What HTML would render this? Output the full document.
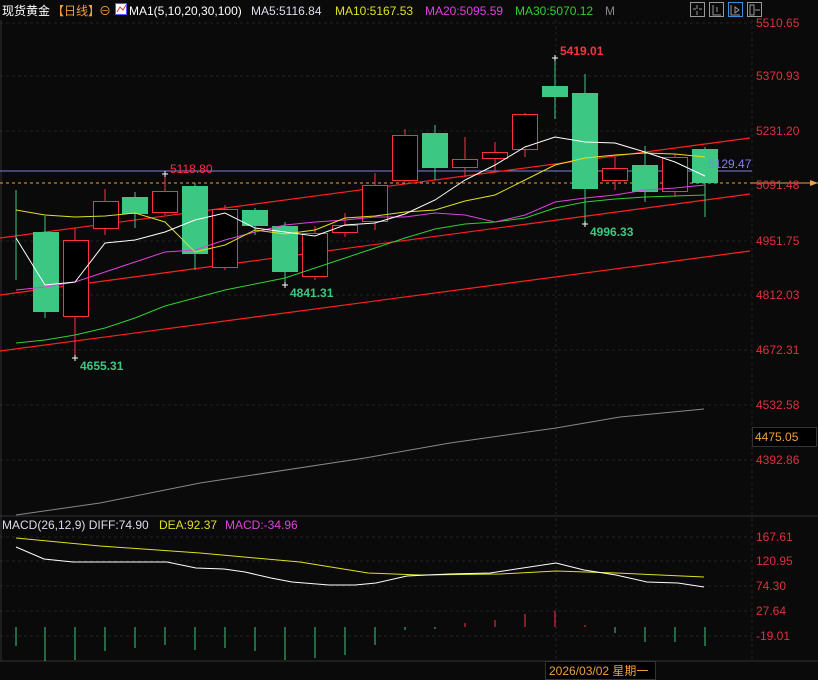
<!DOCTYPE html>
<html><head><meta charset="utf-8"><style>
html,body{margin:0;padding:0;background:#0a0a0a;width:818px;height:680px;overflow:hidden}
svg{display:block}
text{font-family:"Liberation Sans","Noto Sans CJK SC",sans-serif;font-size:12px}
</style></head><body>
<svg width="818" height="680" viewBox="0 0 818 680" xmlns="http://www.w3.org/2000/svg">
<rect width="818" height="680" fill="#0a0a0a"/>
<g stroke="#222" stroke-dasharray="3,3" stroke-width="1">
<line x1="0" y1="23" x2="752" y2="23"/><line x1="0" y1="76" x2="752" y2="76"/><line x1="0" y1="131" x2="752" y2="131"/>
<line x1="0" y1="241" x2="752" y2="241"/><line x1="0" y1="295" x2="752" y2="295"/><line x1="0" y1="350" x2="752" y2="350"/>
<line x1="0" y1="405" x2="752" y2="405"/><line x1="0" y1="460" x2="752" y2="460"/>
<line x1="0" y1="537" x2="752" y2="537"/><line x1="0" y1="561" x2="752" y2="561"/><line x1="0" y1="586" x2="752" y2="586"/><line x1="0" y1="611" x2="752" y2="611"/><line x1="0" y1="636" x2="752" y2="636"/>
<line x1="752" y1="20" x2="752" y2="660"/><line x1="556" y1="20" x2="556" y2="660"/>
</g>
<line x1="0" y1="516" x2="818" y2="516" stroke="#333"/>
<line x1="0" y1="661" x2="818" y2="661" stroke="#333"/>
<line x1="1" y1="20" x2="1" y2="661" stroke="#333"/>
<line x1="0" y1="171" x2="752" y2="171" stroke="#8080e0"/>
<line x1="0" y1="183" x2="752" y2="183" stroke="#f0a040" stroke-dasharray="3,3"/>
<line x1="752" y1="183" x2="818" y2="183" stroke="#f0a040"/>
<g stroke="#ff2020" stroke-width="1.2">
<line x1="0" y1="238" x2="750" y2="138"/>
<line x1="0" y1="295" x2="750" y2="194"/>
<line x1="0" y1="351" x2="750" y2="251"/>
</g>
<polyline fill="none" stroke="#888" points="16,515 100,503 200,483 365,458 450,443 556,428 620,417 704,409" />
<g stroke-width="1">
<line x1="16" y1="190" x2="16" y2="280" stroke="#3cc882"/>
<line x1="45" y1="216" x2="45" y2="318" stroke="#3cc882"/>
<line x1="75" y1="228" x2="75" y2="358" stroke="#ff3040"/>
<line x1="105" y1="189" x2="105" y2="235" stroke="#ff3040"/>
<line x1="135" y1="192" x2="135" y2="228" stroke="#3cc882"/>
<line x1="165" y1="174" x2="165" y2="215" stroke="#ff3040"/>
<line x1="195" y1="183" x2="195" y2="270" stroke="#3cc882"/>
<line x1="225" y1="205" x2="225" y2="270" stroke="#ff3040"/>
<line x1="255" y1="208" x2="255" y2="235" stroke="#3cc882"/>
<line x1="285" y1="222" x2="285" y2="285" stroke="#3cc882"/>
<line x1="315" y1="226" x2="315" y2="280" stroke="#ff3040"/>
<line x1="345" y1="213" x2="345" y2="237" stroke="#ff3040"/>
<line x1="375" y1="173" x2="375" y2="230" stroke="#ff3040"/>
<line x1="405" y1="129" x2="405" y2="182" stroke="#ff3040"/>
<line x1="435" y1="125" x2="435" y2="180" stroke="#3cc882"/>
<line x1="465" y1="137" x2="465" y2="177" stroke="#ff3040"/>
<line x1="495" y1="142" x2="495" y2="172" stroke="#ff3040"/>
<line x1="525" y1="113" x2="525" y2="157" stroke="#ff3040"/>
<line x1="555" y1="58" x2="555" y2="119" stroke="#3cc882"/>
<line x1="585" y1="74" x2="585" y2="224" stroke="#3cc882"/>
<line x1="615" y1="157" x2="615" y2="190" stroke="#ff3040"/>
<line x1="645" y1="146" x2="645" y2="202" stroke="#3cc882"/>
<line x1="675" y1="154" x2="675" y2="197" stroke="#ff3040"/>
<line x1="705" y1="147" x2="705" y2="217" stroke="#3cc882"/>
</g>
<g fill="#3cc882">
<rect x="33" y="232" width="26" height="80"/>
<rect x="122" y="197" width="26" height="17"/>
<rect x="182" y="186" width="26" height="68"/>
<rect x="242" y="210" width="26" height="16"/>
<rect x="272" y="226" width="26" height="46"/>
<rect x="422" y="133" width="26" height="35"/>
<rect x="542" y="86" width="26" height="11"/>
<rect x="572" y="93" width="26" height="96"/>
<rect x="632" y="165" width="26" height="27"/>
<rect x="692" y="149" width="26" height="34"/>
</g>
<g fill="#000" stroke="#ff3040" stroke-width="1">
<rect x="63.5" y="240.5" width="25" height="76"/>
<rect x="93.5" y="201.5" width="25" height="27"/>
<rect x="152.5" y="191.5" width="25" height="21"/>
<rect x="212.5" y="209.5" width="25" height="58"/>
<rect x="302.5" y="233.5" width="25" height="43"/>
<rect x="332.5" y="225.5" width="25" height="7"/>
<rect x="362.5" y="185.5" width="25" height="36"/>
<rect x="392.5" y="135.5" width="25" height="45"/>
<rect x="452.5" y="159.5" width="25" height="8"/>
<rect x="482.5" y="152.5" width="25" height="6"/>
<rect x="512.5" y="114.5" width="25" height="35"/>
<rect x="602.5" y="168.5" width="25" height="12"/>
<rect x="662.5" y="157.5" width="25" height="34"/>
</g>
<g fill="none" stroke-width="1">
<polyline stroke="#30d030" points="16,343 45,340 75,335 105,328 135,318 165,306 195,298 225,290 255,284 285,278 315,268 345,258 375,248 405,238 435,229 465,224 495,222 525,218 555,208 585,202 615,199 645,197 675,196 705,195"/>
<polyline stroke="#e040e0" points="16,290 45,287 75,282 105,272 135,262 165,252 195,250 225,240 255,232 285,225 315,222 345,220 375,217 405,217 435,213 465,215 495,222 525,215 555,202 585,198 615,195 645,190 675,188 705,185"/>
<polyline stroke="#e0e020" points="16,210 45,215 75,217 105,216 135,213 165,222 195,252 225,245 255,230 285,234 315,230 345,218 375,216 405,212 435,210 465,201 495,195 525,180 555,165 585,158 615,155 645,153 675,154 705,157"/>
<polyline stroke="#ffffff" points="16,238 45,285 75,282 105,243 135,240 165,232 195,220 225,213 255,228 285,232 315,236 345,225 375,223 405,214 435,200 465,180 495,165 525,147 555,137 585,142 615,143 645,152 675,162 705,176"/>
</g>
<g stroke="#fff"><path d="M162 174h6M165 171v6M552 58h6M555 55v6M72 358h6M75 355v6M282 285h6M285 282v6M582 224h6M585 221v6"/></g>
<text x="170" y="173" fill="#ff3040">5118.80</text>
<text x="560" y="55" fill="#ff3040" font-weight="bold">5419.01</text>
<text x="80" y="370" fill="#3cc882" font-weight="bold">4655.31</text>
<text x="290" y="297" fill="#3cc882" font-weight="bold">4841.31</text>
<text x="590" y="236" fill="#3cc882" font-weight="bold">4996.33</text>
<text x="708" y="168" fill="#8080f0">5129.47</text>
<g fill="#e0303e">
<text x="756" y="27">5510.65</text><text x="756" y="80">5370.93</text><text x="756" y="135">5231.20</text>
<text x="756" y="189">5091.48</text><text x="756" y="245">4951.75</text><text x="756" y="299">4812.03</text>
<text x="756" y="354">4672.31</text><text x="756" y="409">4532.58</text><text x="756" y="464">4392.86</text>
<text x="756" y="541">167.61</text><text x="756" y="565">120.95</text><text x="756" y="590">74.30</text>
<text x="756" y="615">27.64</text><text x="756" y="640">-19.01</text>
</g>
<rect x="752.5" y="427.5" width="64" height="19" fill="#000" stroke="#333"/>
<text x="755" y="441" fill="#f0a040">4475.05</text>
<path d="M810 180l8 3-8 3z" fill="#f0a040"/>
<text x="2" y="15" fill="#fff">现货黄金</text>
<text x="52" y="15" fill="#f0a040">【日线】</text>
<text x="99" y="15" fill="#f0a040">⊖</text>
<rect x="115.5" y="3.5" width="11" height="11" fill="#fff" stroke="#55f"/>
<path d="M117 12l3-5 3 3 3-5" stroke="#e33" fill="none"/>
<text x="129" y="15" fill="#fff">MA1(5,10,20,30,100)</text>
<text x="251" y="15" fill="#dde">MA5:5116.84</text>
<text x="335" y="15" fill="#e0e020">MA10:5167.53</text>
<text x="425" y="15" fill="#e040e0">MA20:5095.59</text>
<text x="515" y="15" fill="#30d030">MA30:5070.12</text>
<text x="605" y="15" fill="#888">M</text>
<g fill="none" stroke="#999">
<rect x="690.5" y="2.5" width="14" height="14"/><rect x="709.5" y="2.5" width="14" height="14"/>
<rect x="728.5" y="2.5" width="14" height="14" stroke="#3a8ee0"/><rect x="747.5" y="2.5" width="14" height="14"/>
<path d="M697 5v4M697 11v4M693 9h3M699 9h3M713 5v10h8M717 7v5M731 5v10h9M735 7l4 3-4 3z M750 5v10h4v-10z M755 10h5"/>
</g>
<text x="2" y="529" fill="#dde">MACD(26,12,9) DIFF:74.90</text>
<text x="159" y="529" fill="#e0e020">DEA:92.37</text>
<text x="225" y="529" fill="#e040e0">MACD:-34.96</text>
<g stroke-width="1">
<g stroke="#3cc882">
<line x1="16" y1="627" x2="16" y2="646"/><line x1="45" y1="627" x2="45" y2="661"/><line x1="75" y1="627" x2="75" y2="660"/>
<line x1="105" y1="627" x2="105" y2="651"/><line x1="135" y1="627" x2="135" y2="648"/><line x1="165" y1="627" x2="165" y2="645"/>
<line x1="195" y1="627" x2="195" y2="650"/><line x1="225" y1="627" x2="225" y2="648"/><line x1="255" y1="627" x2="255" y2="651"/>
<line x1="285" y1="627" x2="285" y2="660"/><line x1="315" y1="627" x2="315" y2="658"/><line x1="345" y1="627" x2="345" y2="655"/>
<line x1="375" y1="627" x2="375" y2="645"/><line x1="405" y1="627" x2="405" y2="630"/><line x1="435" y1="627" x2="435" y2="629"/>
<line x1="615" y1="627" x2="615" y2="633"/><line x1="645" y1="627" x2="645" y2="642"/><line x1="675" y1="627" x2="675" y2="642"/><line x1="705" y1="627" x2="705" y2="646"/>
</g>
<g stroke="#ff3040">
<line x1="465" y1="627" x2="465" y2="623"/><line x1="495" y1="627" x2="495" y2="620"/><line x1="525" y1="627" x2="525" y2="614"/><line x1="555" y1="627" x2="555" y2="611"/><line x1="585" y1="627" x2="585" y2="625"/>
</g>
</g>
<polyline fill="none" stroke="#e0e020" points="16,538 100,546 200,553 300,562 368,573 420,575 500,574 556,571 616,573 660,575 704,577"/>
<polyline fill="none" stroke="#fff" points="16,547 44,559 73,562 151,562 167,562 196,568 224,569 245,572 271,578 292,582 329,585 355,585 376,583 407,576 449,574 490,573 556,563 584,570 616,575 647,582 678,583 704,587"/>
<rect x="545.5" y="661.5" width="110" height="18" fill="#000" stroke="#333"/>
<text x="549" y="675" fill="#f0a040">2026/03/02 星期一</text>
</svg>
</body></html>
